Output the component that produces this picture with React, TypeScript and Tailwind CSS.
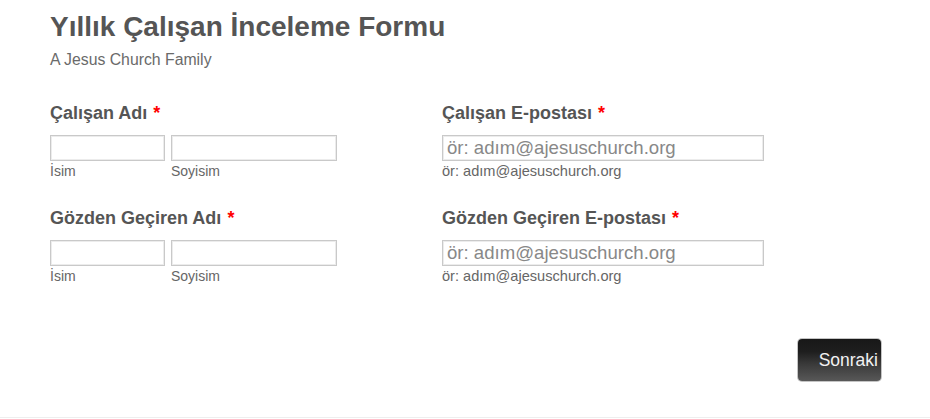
const labelCls = 'block text-[18px] leading-[20px] font-bold text-[#555]'
const inputCls =
  'h-[26px] border border-[#c9c9c9] bg-white shadow-[inset_0_0_0_1px_#ececec] outline-none px-[4px]'

function Req() {
  return <span className="ml-[6px] text-[#f00]">*</span>
}

function NameField({ label }: { label: string }) {
  return (
    <div className="flex flex-col">
      <label className={labelCls}>
        {label}
        <Req />
      </label>
      <div className="mt-[12px] flex gap-[6px]">
        <div className="flex flex-col">
          <input className={`${inputCls} w-[115px]`} />
          <span className="mt-[2px] block text-[14px] leading-[16px] text-[#666]">İsim</span>
        </div>
        <div className="flex flex-col">
          <input className={`${inputCls} w-[166px]`} />
          <span className="mt-[2px] block text-[14px] leading-[16px] text-[#666]">Soyisim</span>
        </div>
      </div>
    </div>
  )
}

function EmailField({ label }: { label: string }) {
  return (
    <div className="flex flex-col">
      <label className={labelCls}>
        {label}
        <Req />
      </label>
      <input
        className={`${inputCls} mt-[12px] w-[322px] text-[18.6px] placeholder:text-[#888]`}
        placeholder="ör: adım@ajesuschurch.org"
      />
      <span className="mt-[2px] block text-[14.6px] leading-[16px] text-[#666]">
        ör: adım@ajesuschurch.org
      </span>
    </div>
  )
}

export default function App() {
  return (
    <div className="h-[419px] w-[930px] bg-white font-['Liberation_Sans',Arial,sans-serif] flex flex-col">
      <div className="flex-1 px-[50px] pt-[11px]">
        <h1 className="text-[28px] leading-[32px] font-bold text-[#555]">
          Yıllık Çalışan İnceleme Formu
        </h1>
        <p className="mt-[8px] text-[15.8px] leading-[18px] text-[#6a6a6a]">A Jesus Church Family</p>

        <div className="mt-[34px] grid grid-cols-[392px_1fr] gap-y-[29px]">
          <NameField label="Çalışan Adı" />
          <EmailField label="Çalışan E-postası" />
          <NameField label="Gözden Geçiren Adı" />
          <EmailField label="Gözden Geçiren E-postası" />
        </div>

        <div className="mt-[55px] flex justify-end">
          <button
            type="button"
            className="mr-[-1px] h-[42px] w-[83px] rounded-[4px] bg-[linear-gradient(180deg,#181818_0%,#1e1e1e_30%,#3a3a3a_60%,#585858_100%)] pr-[3px] text-right text-[17.5px] text-[#f2f2f2] shadow-[0_0_0_1px_#c4c4c4]"
          >
            Sonraki
          </button>
        </div>
      </div>
      <div className="h-[2px] border-t border-[#eee]" />
    </div>
  )
}
